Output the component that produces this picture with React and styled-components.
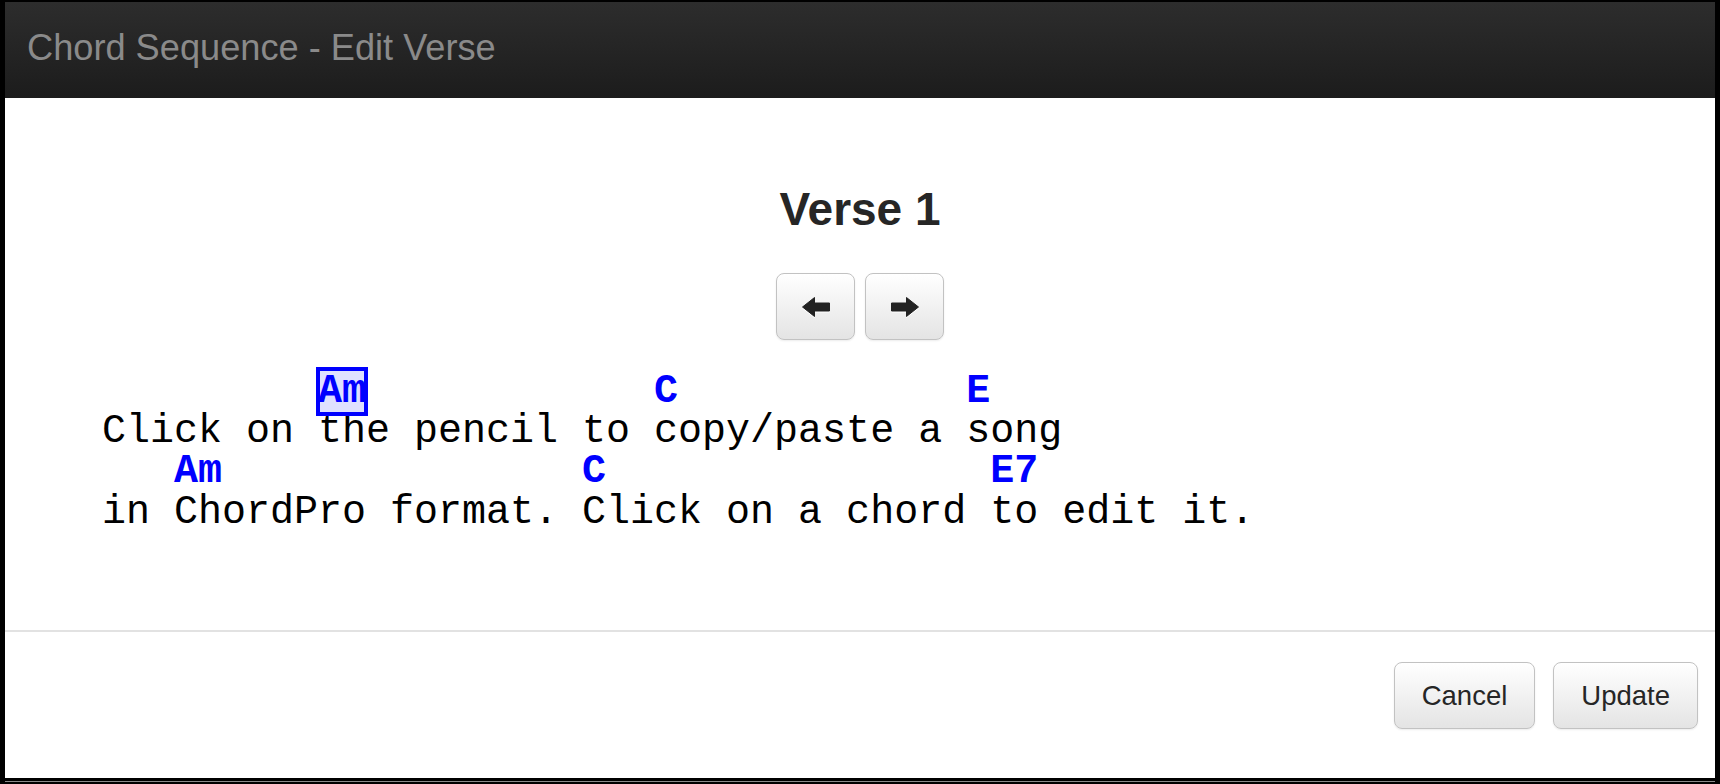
import React from 'react';
import styled, { createGlobalStyle } from 'styled-components';

const GlobalStyle = createGlobalStyle`
  html, body {
    margin: 0;
    padding: 0;
    background: #000;
  }
  body {
    font-family: "Liberation Sans", Arial, sans-serif;
  }
`;

const song = [
  {
    chords: [
      { at: 9, name: 'Am', active: true },
      { at: 23, name: 'C' },
      { at: 36, name: 'E' },
    ],
    lyric: 'Click on the pencil to copy/paste a song',
  },
  {
    chords: [
      { at: 3, name: 'Am' },
      { at: 20, name: 'C' },
      { at: 37, name: 'E7' },
    ],
    lyric: 'in ChordPro format. Click on a chord to edit it.',
  },
];

const ArrowIcon = ({ dir }) => (
  <svg width="28" height="20" viewBox="0 0 28 20">
    <path
      d="M0.5 10 L12.5 0.5 L12.5 6 L27.5 6 L27.5 14 L12.5 14 L12.5 19.5 Z"
      fill="#222"
      stroke="#222"
      strokeWidth="1"
      strokeLinejoin="round"
      transform={dir === 'right' ? 'matrix(-1 0 0 1 28 0)' : undefined}
    />
  </svg>
);

const ChordRow = ({ chords }) => {
  let col = 0;
  const parts = [];
  chords.forEach((c, i) => {
    parts.push(' '.repeat(Math.max(0, c.at - col)));
    parts.push(
      <Chord key={i} $active={c.active}>
        {c.name}
      </Chord>
    );
    col = c.at + c.name.length;
  });
  return <Line>{parts}</Line>;
};

const App = () => {
  return (
    <>
      <GlobalStyle />
      <Frame>
        <Modal>
          <Header>
            <HeaderTitle>Chord Sequence - Edit Verse</HeaderTitle>
          </Header>
          <Body>
            <VerseTitle>Verse 1</VerseTitle>
            <NavGroup>
              <NavButton>
                <ArrowIcon dir="left" />
              </NavButton>
              <NavButton>
                <ArrowIcon dir="right" />
              </NavButton>
            </NavGroup>
            <Sheet>
              {song.map((row, i) => (
                <React.Fragment key={i}>
                  <ChordRow chords={row.chords} />
                  <Line>{row.lyric}</Line>
                </React.Fragment>
              ))}
            </Sheet>
          </Body>
          <Footer>
            <FooterButton>Cancel</FooterButton>
            <FooterButton>Update</FooterButton>
          </Footer>
        </Modal>
        <BottomEdge />
      </Frame>
    </>
  );
};

const Frame = styled.div`
  width: 1720px;
  height: 784px;
  padding: 2px 5px 0 5px;
  box-sizing: border-box;
  background: #000;
  overflow: hidden;
`;

const Modal = styled.div`
  height: 776px;
  background: #fff;
  display: flex;
  flex-direction: column;
`;

const Header = styled.div`
  height: 96px;
  box-sizing: border-box;
  padding: 26px 22px 0;
  background: linear-gradient(to bottom, #2d2d2d, #1c1c1c);
`;

const HeaderTitle = styled.div`
  font-size: 36.2px;
  line-height: 40px;
  color: #8a8a8a;
`;

const Body = styled.div`
  flex: 1;
  display: flex;
  flex-direction: column;
  align-items: center;
  padding-top: 88px;
`;

const VerseTitle = styled.div`
  font-size: 46px;
  line-height: 46px;
  font-weight: bold;
  color: #262626;
`;

const NavGroup = styled.div`
  display: flex;
  gap: 10px;
  margin-top: 41px;
`;

const NavButton = styled.div`
  width: 79px;
  height: 67px;
  box-sizing: border-box;
  border: 1.5px solid #c2c2c2;
  border-radius: 8px;
  background: linear-gradient(to bottom, #ffffff, #e4e4e4);
  box-shadow: 0 1px 2px rgba(0, 0, 0, 0.08);
  display: flex;
  align-items: center;
  justify-content: center;

  svg {
    filter: drop-shadow(0 1px 0 #fff);
  }
`;

const Sheet = styled.div`
  align-self: stretch;
  padding-left: 97px;
  margin-top: 32px;
  font-family: "Liberation Mono", "Courier New", monospace;
  font-size: 40px;
  color: #000;
`;

const Line = styled.div`
  white-space: pre;
  line-height: 40.2px;
  height: 40.2px;
`;

const Chord = styled.span`
  font-weight: bold;
  color: #0000ff;
  background: ${(p) => (p.$active ? '#dfe1ff' : 'transparent')};
  outline: ${(p) => (p.$active ? '4px solid #0000ff' : 'none')};
  outline-offset: -2px;
`;

const Footer = styled.div`
  height: 148px;
  box-sizing: border-box;
  border-top: 2px solid #e2e2e2;
  padding: 30px 17px 0 0;
  display: flex;
  justify-content: flex-end;
  align-items: flex-start;
  gap: 18px;
`;

const FooterButton = styled.div`
  height: 67px;
  box-sizing: border-box;
  padding: 0 27px;
  border: 1.5px solid #c2c2c2;
  border-radius: 8px;
  background: linear-gradient(to bottom, #ffffff, #e4e4e4);
  box-shadow: 0 1px 2px rgba(0, 0, 0, 0.08);
  display: flex;
  align-items: center;
  font-size: 27.5px;
  color: #262626;
`;

const BottomEdge = styled.div`
  height: 1px;
  margin-top: 3px;
  background: #8a8a8a;
`;

export default App;
